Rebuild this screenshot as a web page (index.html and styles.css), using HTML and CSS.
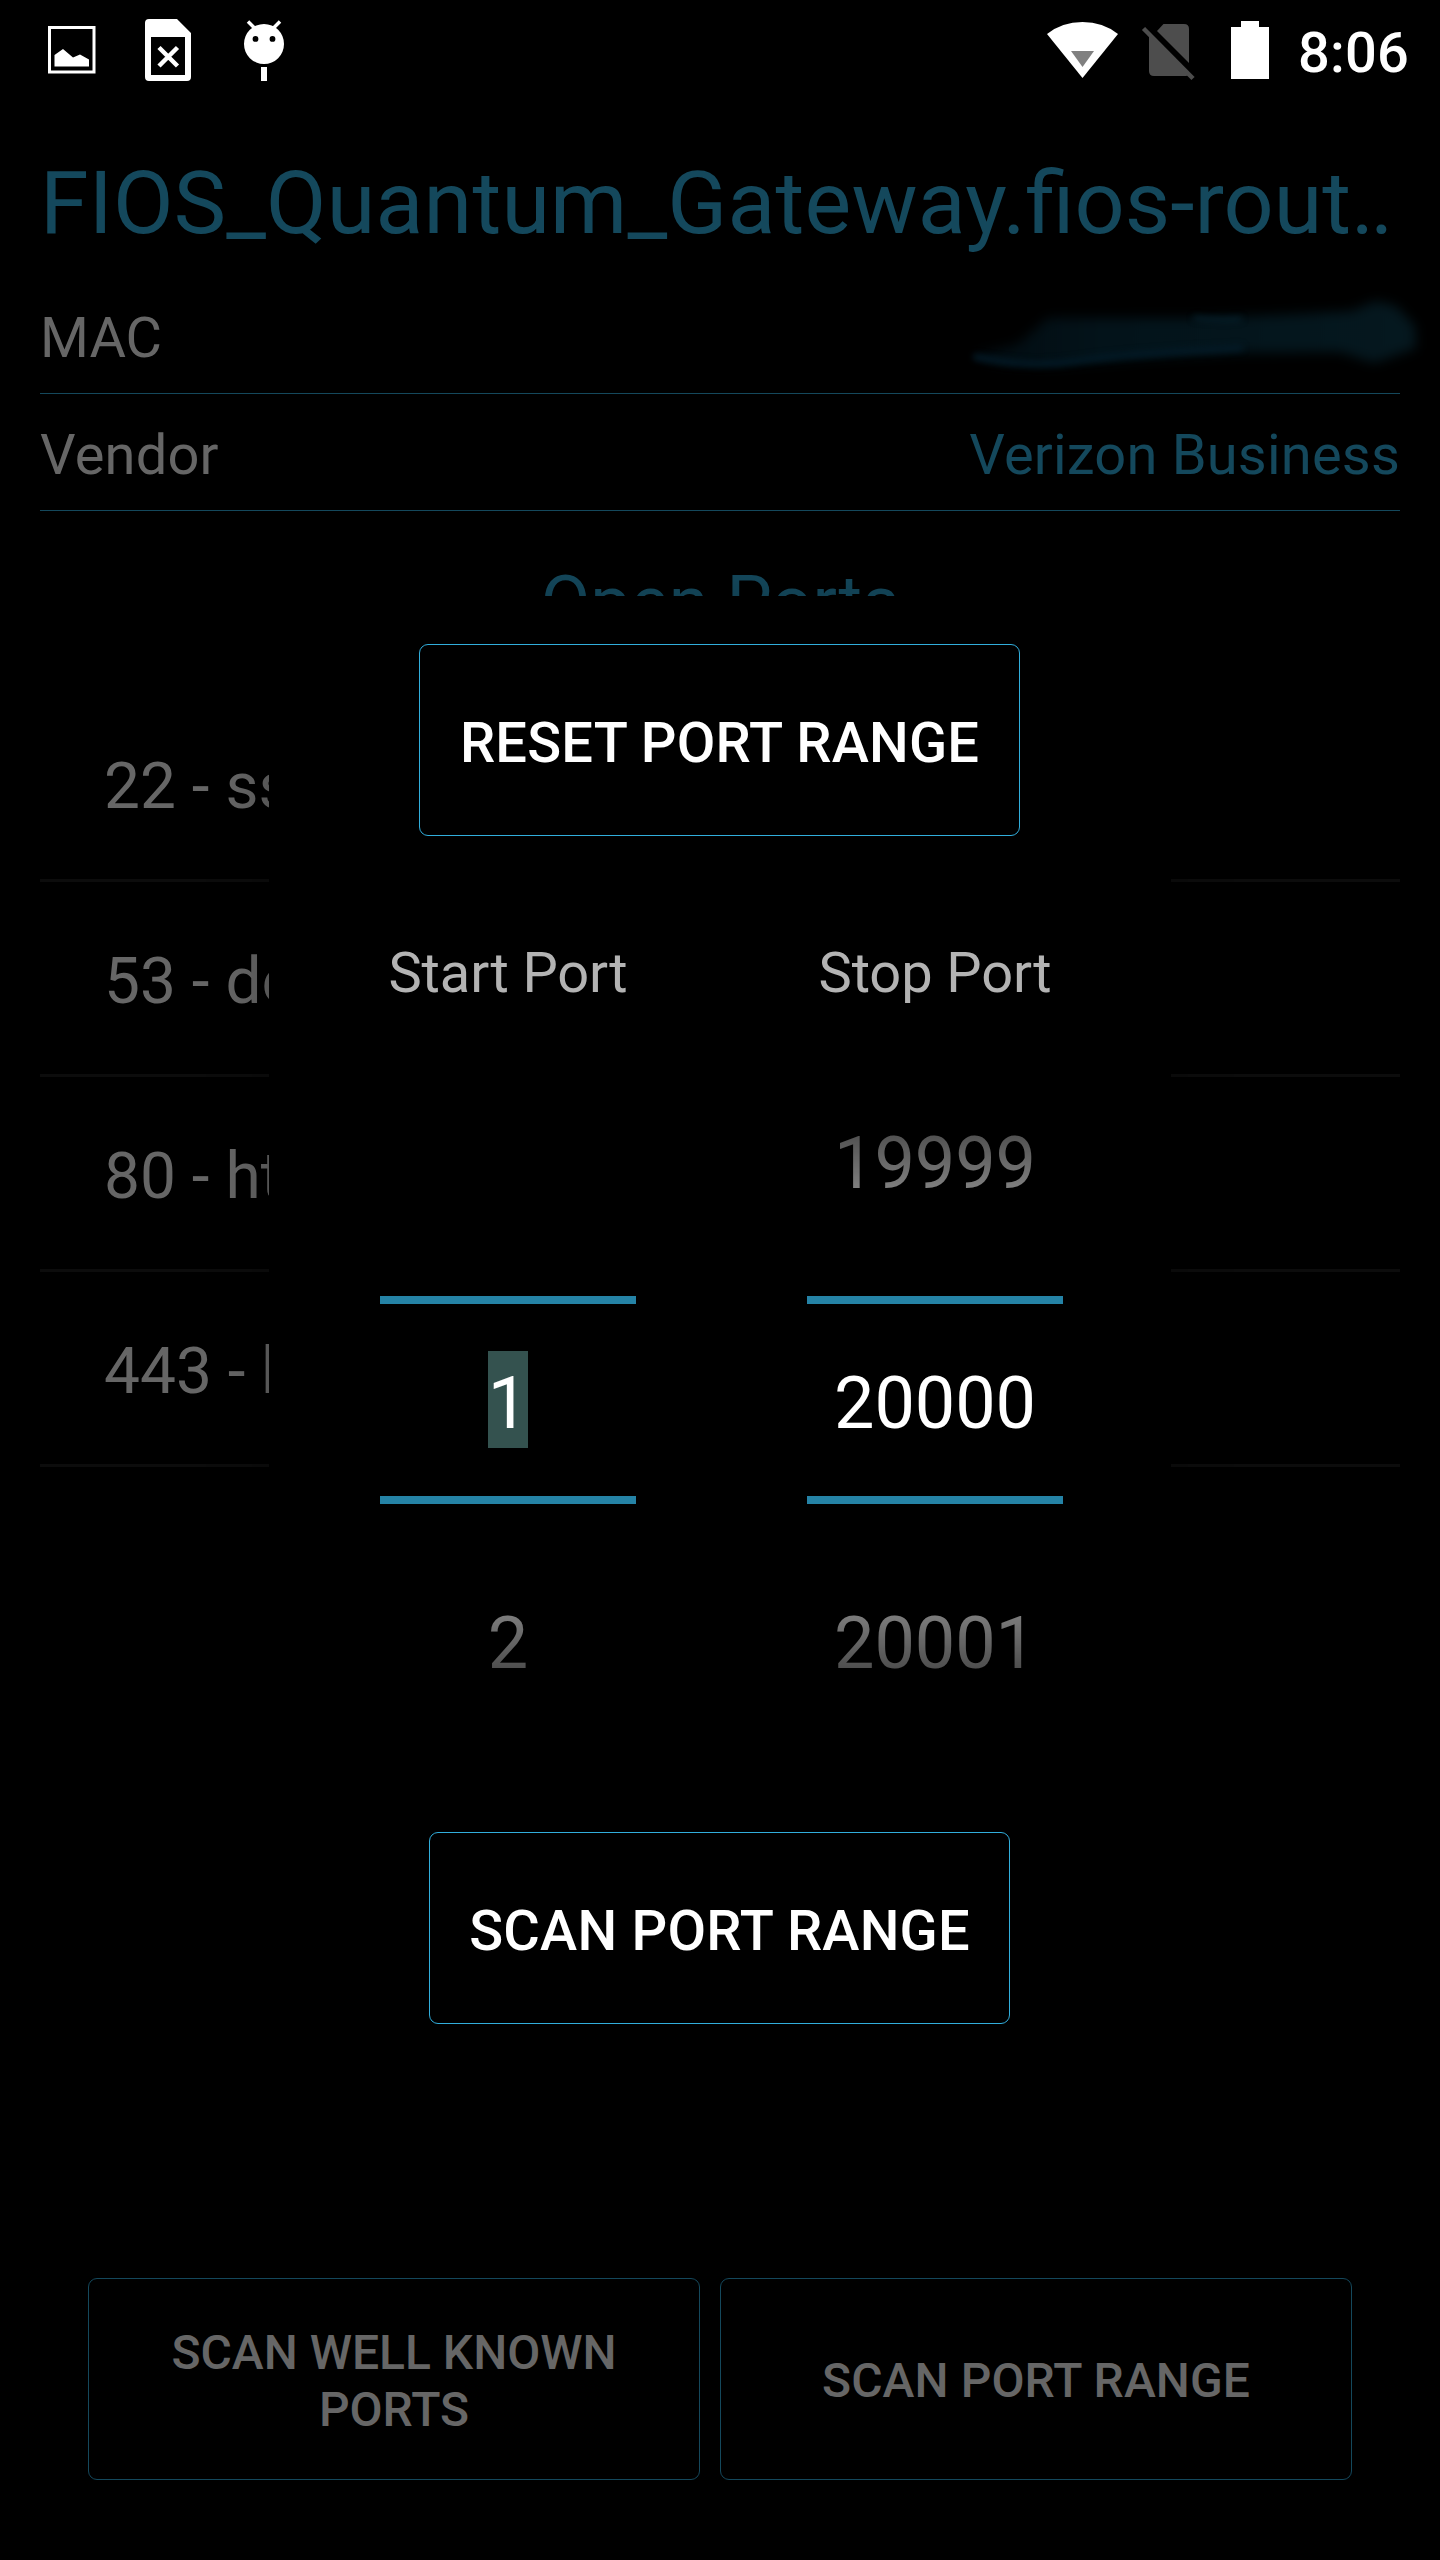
FILE: index.html
```html
<!DOCTYPE html>
<html lang="en">
<head>
<meta charset="utf-8">
<title>Port scanner</title>
<link rel="stylesheet" href="styles.css">
</head>
<body>
<div class="screen">
  <header class="status">
    <svg class="status-icons" width="300" height="96" viewBox="0 0 300 96" fill="#fff">
      <rect x="49.5" y="27.5" width="44.5" height="44.5" fill="none" stroke="#fff" stroke-width="3"/>
      <path d="M54.5 66.5V55L63 49l10 8.5 7-3 9 5v7z"/>
      <path fill-rule="evenodd" d="M149 19h28l14 14v44q0 4-4 4h-38q-4 0-4-4V23q0-4 4-4zM151 37v38h34V37z"/>
      <path d="M159 47.500l18.500 18.500M177.500 47.500L159 66" fill="none" stroke="#fff" stroke-width="4.500"/>
      <path fill-rule="evenodd" d="M264 24a20 20 0 1 1 0 40a20 20 0 1 1 0-40zM255.500 36a2.900 2.900 0 1 0 0 5.800a2.900 2.900 0 1 0 0-5.800zM272.500 36a2.900 2.900 0 1 0 0 5.800a2.900 2.900 0 1 0 0-5.800z"/>
      <path d="M248 21.500l7 7M280 21.500l-7 7" fill="none" stroke="#fff" stroke-width="3.500"/>
      <rect x="261" y="67" width="6" height="14"/>
    </svg>
    <div class="status-right">
      <svg width="230" height="96" viewBox="1040 0 230 96" fill="#fff">
        <path d="M1047 34Q1062 22 1082.500 22T1118 34L1082.500 78z"/>
        <path d="M1071 51h23l-11.500 16z" fill="#808080"/>
        <g fill="#4d4d4d">
          <path d="M1163.500 24H1184q5 0 5 5v34L1157 31z"/>
          <path d="M1149 34.500L1189 74q-1 2-3 2h-32q-5 0-5-5z"/>
          <path d="M1143.500 28.500L1193 78.500" fill="none" stroke="#4d4d4d" stroke-width="4.500"/>
        </g>
        <path d="M1241 21h18v6h10v52h-38V27h10z"/>
      </svg>
      <time class="clock">8:06</time>
    </div>
  </header>

  <h1 class="host"><span class="name">FIOS_Quantum_Gateway.</span>fios-rout<span class="dots">..</span></h1>

  <div class="info">
    <span>MAC</span>
    <svg class="smudge" width="480" height="116" viewBox="960 277 480 116">
      <defs>
        <filter id="soft" x="-10%" y="-40%" width="120%" height="180%" color-interpolation-filters="sRGB"><feGaussianBlur stdDeviation="6"/></filter>
        <filter id="streak" x="-10%" y="-100%" width="120%" height="300%" color-interpolation-filters="sRGB"><feGaussianBlur stdDeviation="3"/></filter>
        <linearGradient id="fade"><stop offset="0" stop-color="#020b10"/><stop offset=".3" stop-color="#03131a"/><stop offset="1" stop-color="#05181f"/></linearGradient>
      </defs>
      <path filter="url(#soft)" d="M970 356L1018 344L1048 318L1190 318L1280 315L1352 311L1376 301L1396 306L1415 326L1416 348L1374 363L1340 352L1240 353L1150 358L1050 366L1000 364z" fill="url(#fade)"/>
      <g filter="url(#streak)" fill="none" stroke-linecap="round">
        <path d="M976 357Q1030 368 1075 361T1240 348" stroke="#031b28" stroke-width="6"/>
        <path d="M1195 318Q1220 321 1240 319" stroke="#06222e" stroke-width="4"/>
      </g>
    </svg>
  </div>
  <div class="info">
    <span class="key">Vendor</span>
    <span class="accent">Verizon Business</span>
  </div>

  <h2 class="section">Open Ports</h2>
  <ul class="ports">
    <li>22 - ssh</li>
    <li>53 - domain</li>
    <li>80 - http</li>
    <li>443 - https</li>
  </ul>

  <footer class="actions">
    <button class="btn btn-dim btn-known">SCAN WELL KNOWN PORTS</button>
    <button class="btn btn-dim btn-range">SCAN PORT RANGE</button>
  </footer>

  <div class="dialog">
    <button class="btn btn-reset">RESET PORT RANGE</button>
    <div class="pickers">
      <div class="picker">
        <div class="label">Start Port</div>
        <div class="prev"></div>
        <div class="value"><span class="selected">1</span></div>
        <div class="next">2</div>
      </div>
      <div class="picker">
        <div class="label">Stop Port</div>
        <div class="prev">19999</div>
        <div class="value">20000</div>
        <div class="next">20001</div>
      </div>
    </div>
    <button class="btn btn-scan">SCAN PORT RANGE</button>
  </div>
</div>
</body>
</html>
```

FILE: styles.css
```css
* { box-sizing: border-box; }

body {
  margin: 0;
  background: #000;
  font-family: Roboto, sans-serif;
}

.screen {
  position: relative;
  display: flex;
  flex-direction: column;
  width: 1440px;
  height: 2560px;
  overflow: hidden;
  background: #000;
  color: #666;
}

/* Status bar */
.status {
  display: flex;
  justify-content: space-between;
  height: 96px;
}
.status svg { display: block; }
.status-right { display: flex; padding-right: 32px; }
.clock {
  width: 110px;
  margin-left: 28px;
  padding-top: 9px;
  color: #fff;
  font-size: 56px;
  font-weight: 500;
  line-height: 88px;
  letter-spacing: .2px;
  text-align: right;
}

/* Host details */
.host {
  height: 181px;
  margin: 0;
  padding: 33px 40px 0;
  color: #14485c;
  font-size: 88px;
  font-weight: 400;
  line-height: 148px;
  white-space: nowrap;
}
.name { letter-spacing: .2px; }
.dots { letter-spacing: -4px; }

.info {
  display: flex;
  justify-content: space-between;
  height: 117px;
  margin: 0 40px;
  padding-top: 6px;
  border-bottom: 1px solid #14485c;
  font-size: 56px;
  line-height: 110px;
}
.key { letter-spacing: .2px; }
.accent { color: #14485c; letter-spacing: .2px; }
.smudge { flex: none; margin: -6px -40px 0 0; }

.section {
  height: 176px;
  margin: 0;
  padding-top: 7px;
  color: #14485c;
  font-size: 72px;
  font-weight: 400;
  line-height: 169px;
  text-align: center;
}

.ports {
  margin: 0 40px;
  padding: 0;
  list-style: none;
}
.ports li {
  height: 195px;
  padding: 7px 0 0 64px;
  border-bottom: 3px solid #0c0c0c;
  font-size: 64px;
  line-height: 186px;
}

/* Buttons */
.btn {
  display: block;
  height: 192px;
  padding: 6px 0 0;
  background: #000;
  border: 1px solid #31aedc;
  border-radius: 9px;
  color: #fff;
  font: 500 56px/66px Roboto, sans-serif;
  letter-spacing: .2px;
}
.btn-dim {
  height: 202px;
  padding: 4px 60px 0;
  border-color: #14485c;
  color: #666;
  font-size: 48px;
  line-height: 57px;
  letter-spacing: 0;
}
.btn-known { width: 612px; }
.btn-range { width: 632px; padding-top: 2px; letter-spacing: .1px; }
.actions {
  display: flex;
  gap: 20px;
  margin-top: auto;
  padding: 0 88px 80px;
}

/* Port range dialog */
.dialog {
  position: absolute;
  top: 596px;
  left: 269px;
  display: flex;
  flex-direction: column;
  align-items: center;
  width: 902px;
  height: 1476px;
  padding-top: 48px;
  background: #000;
  border-radius: 8px;
  box-shadow: 0 16px 60px rgba(0, 0, 0, .3);
}
.btn-reset { width: 601px; margin-right: 1px; }
.btn-scan { width: 581px; margin: 72px 1px 0 0; }

.pickers {
  display: flex;
  gap: 171px;
  margin-left: 3px;
}
.picker {
  width: 256px;
  color: #fff;
  font-size: 72px;
  letter-spacing: -.1px;
  text-align: center;
}
.label {
  margin: 104px 0 34px;
  color: #b3b3b3;
  font-size: 56px;
  line-height: 66px;
}
.prev {
  height: 256px;
  line-height: 247px;
  -webkit-mask-image: linear-gradient(transparent, rgba(0, 0, 0, .86));
  mask-image: linear-gradient(transparent, rgba(0, 0, 0, .86));
}
.value {
  height: 208px;
  padding-top: 7px;
  border: solid #2583a6;
  border-width: 8px 0;
  line-height: 185px;
}
.selected {
  padding: 10px 0 2px;
  background: #34524f;
}
.next {
  height: 256px;
  padding-top: 23px;
  line-height: 233px;
  -webkit-mask-image: linear-gradient(rgba(0, 0, 0, .86), transparent);
  mask-image: linear-gradient(rgba(0, 0, 0, .86), transparent);
}
```
